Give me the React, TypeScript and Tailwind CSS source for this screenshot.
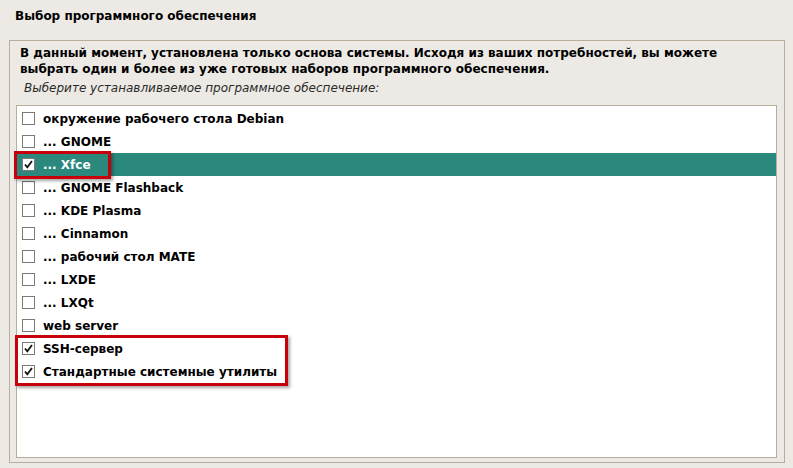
import React from "react";

const items: { label: string; checked: boolean; selected?: boolean }[] = [
  { label: "окружение рабочего стола Debian", checked: false },
  { label: "... GNOME", checked: false },
  { label: "... Xfce", checked: true, selected: true },
  { label: "... GNOME Flashback", checked: false },
  { label: "... KDE Plasma", checked: false },
  { label: "... Cinnamon", checked: false },
  { label: "... рабочий стол MATE", checked: false },
  { label: "... LXDE", checked: false },
  { label: "... LXQt", checked: false },
  { label: "web server", checked: false },
  { label: "SSH-сервер", checked: true },
  { label: "Стандартные системные утилиты", checked: true },
];

function Box({ checked }: { checked: boolean }) {
  return (
    <div className="w-[13px] h-[13px] border border-[#7a7a7a] bg-white flex items-center justify-center shrink-0">
      {checked && (
        <svg width="11" height="11" viewBox="0 0 11 11">
          <path d="M2 5.5 L4.3 8.3 L9 2" fill="none" stroke="#111" strokeWidth="1.8" />
        </svg>
      )}
    </div>
  );
}

export default function App() {
  return (
    <div
      className="relative w-[793px] h-[468px] bg-[#edeae5] text-black overflow-hidden"
      style={{ fontFamily: '"DejaVu Sans", Verdana, sans-serif' }}
    >
      <div className="pl-[15px] pt-[8px] h-[40px] text-[12px] font-bold leading-[16px]">
        Выбор программного обеспечения
      </div>
      <div className="ml-[9px] w-[776px] h-[423px] border border-[#b9ad9c] flex flex-col pt-[4px]">
        <div className="pl-[10px] text-[12px] font-bold leading-[16px]">
          В данный момент, установлена только основа системы. Исходя из ваших потребностей, вы можете
          <br />
          выбрать один и более из уже готовых наборов программного обеспечения.
        </div>
        <div className="pl-[14px] mt-[3px] text-[12px] italic leading-[16px] text-[#2a2a2a]">
          Выберите устанавливаемое программное обеспечение:
        </div>
        <div className="ml-[6px] mr-[7px] mb-[4px] mt-[9px] flex-1 border border-[#b9ad9c] bg-white pt-[1px]">
          {items.map((it) => (
            <div
              key={it.label}
              className={
                "h-[23px] flex items-center pl-[5px] gap-[8px] text-[12px] font-bold " +
                (it.selected ? "bg-[#2a887c] text-white" : "text-black")
              }
            >
              <Box checked={it.checked} />
              <span>{it.label}</span>
            </div>
          ))}
        </div>
      </div>
      <div className="absolute left-[14px] top-[151px] w-[97px] h-[28px] border-[3px] border-[#c8000a] shadow-[2px_2px_3px_rgba(0,0,0,0.35)]" />
      <div className="absolute left-[15px] top-[335px] w-[273px] h-[51px] border-[3px] border-[#c8000a] shadow-[2px_2px_3px_rgba(0,0,0,0.35)]" />
    </div>
  );
}
